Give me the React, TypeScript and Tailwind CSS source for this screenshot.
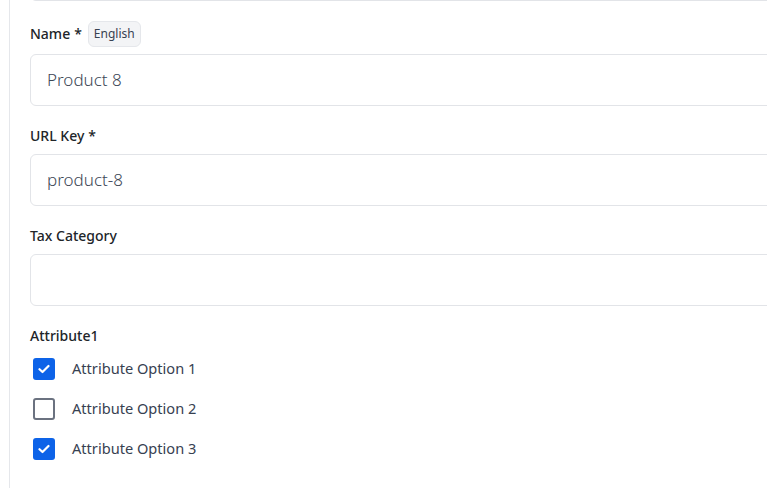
import React from 'react';

const font = { fontFamily: '"Noto Sans", "Open Sans", Arial, sans-serif' };

function CheckRow({ label, checked }: { label: string; checked: boolean }) {
  return (
    <label className="flex h-10 items-center">
      {checked ? (
        <span className="ml-[3px] flex h-[22px] w-[22px] items-center justify-center rounded-[3px] bg-[#0d63e8]">
          <svg width="12" height="10" viewBox="0 0 12 10" fill="none">
            <path d="M1.5 5.2 4.5 8 10.5 2" stroke="white" strokeWidth="2.2" strokeLinecap="round" strokeLinejoin="round" />
          </svg>
        </span>
      ) : (
        <span className="ml-[3px] h-[22px] w-[22px] rounded-[3px] border-2 border-[#6b7280] bg-white" />
      )}
      <span className="ml-[17px] text-[14.6px] text-[#374151]">{label}</span>
    </label>
  );
}

function Field({ label, required, badge, value }: { label: string; required?: boolean; badge?: string; value?: string }) {
  return (
    <div className="mb-5">
      <div className={`flex items-center gap-[6px] ${badge ? 'mb-[7px] h-[26px]' : 'mb-2 h-5'}`}>
        <span className="text-[14px] font-medium leading-5 text-[#212529]">
          {label}
          {required && <span className="ml-1">*</span>}
        </span>
        {badge && (
          <span className="rounded-md border border-[#e5e7eb] bg-[#f3f4f6] px-[5px] py-[3px] text-[12px] leading-[18px] text-[#374151]">
            {badge}
          </span>
        )}
      </div>
      <div className="flex h-[52px] items-center rounded-md border border-[#e2e4e8] bg-white px-4 text-[17px] font-light text-[#3d4756]">
        {value}
      </div>
    </div>
  );
}

export default function App() {
  return (
    <div className="h-[488px] w-[767px] overflow-hidden bg-white" style={font}>
      <div className="ml-[9px] min-h-[560px] w-[1000px] border-l border-[#e5e7eb] pl-5">
        <div className="-mt-[51px] mb-5 h-[52px] rounded-md border border-[#e2e4e8]" />
        <Field label="Name" required badge="English" value="Product 8" />
        <Field label="URL Key" required value="product-8" />
        <Field label="Tax Category" />
        <div>
          <div className="mb-[3px] h-5 text-[14px] font-medium leading-5 text-[#212529]">Attribute1</div>
          <CheckRow label="Attribute Option 1" checked />
          <CheckRow label="Attribute Option 2" checked={false} />
          <CheckRow label="Attribute Option 3" checked />
        </div>
      </div>
    </div>
  );
}
